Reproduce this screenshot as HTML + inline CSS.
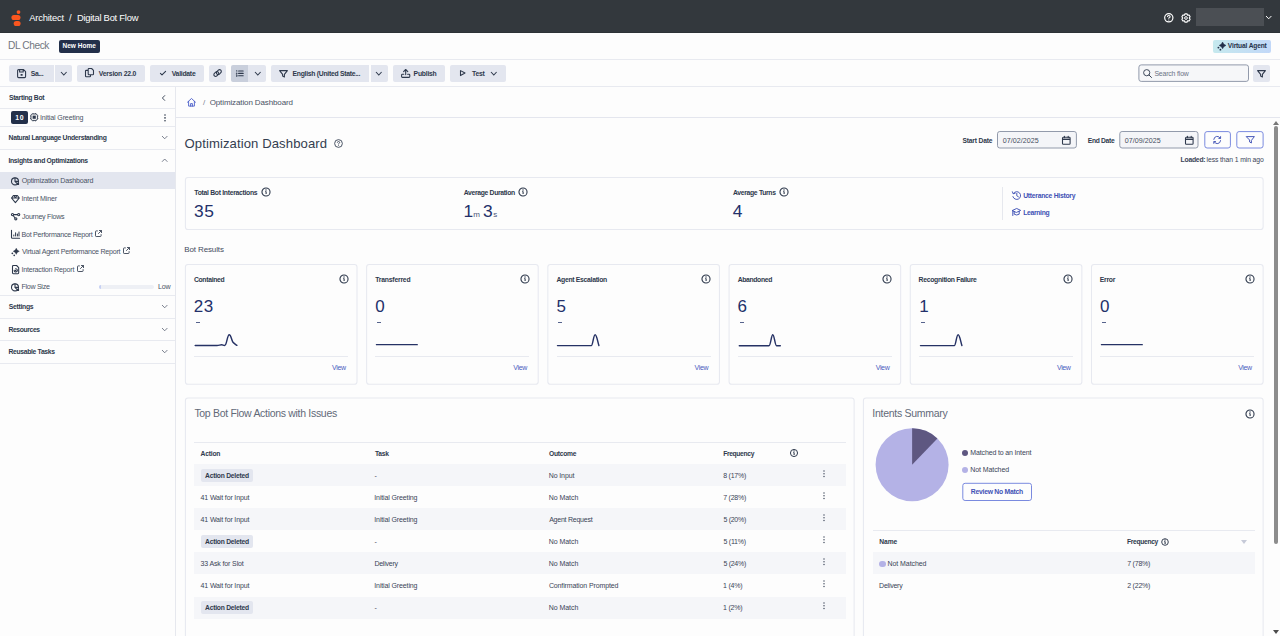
<!DOCTYPE html>
<html lang="en"><head><meta charset="utf-8"><title>Architect / Digital Bot Flow</title>
<style>
*{box-sizing:border-box;margin:0;padding:0}
html,body{width:1280px;height:636px;overflow:hidden;background:#fdfdfd;font-family:"Liberation Sans",sans-serif;color:#2e394c}
.a,.t{position:absolute;white-space:nowrap}
.t{line-height:1;color:#2e394c}
svg{position:absolute;overflow:visible}
.hl{height:1px;background:#e8eaf0}
.btn{background:#e3e6ef;border-radius:2px;height:17.4px;top:64.6px}
.card{background:#fdfdfd;border:1px solid #e4e6ec;border-radius:2.5px}
.row{left:194px;width:652px;height:22px;background:#f5f6f9}
</style></head><body>
<div class="a" style="left:0;top:0;width:1280px;height:33px;background:#33383d;border-bottom:1px solid #2d3236"></div>
<svg style="left:11.2px;top:9.7px" width="10" height="16.4" viewBox="0 0 10 16.4"><circle cx="7.5" cy="2.1" r="1.9" fill="#fb561f"/><rect x=".4" y="4.9" width="9.1" height="5.1" rx="2.55" fill="#fb561f"/><rect x="2.7" y="11" width="6.9" height="5.1" rx="2.55" fill="#fb561f"/></svg>
<svg style="left:1163.6px;top:12.9px" width="9.6" height="9.6" viewBox="0 0 10 10"><circle cx="5" cy="5" r="4.3" fill="none" stroke="#fff" stroke-width="1.25"/><path d="M3.6 4.1Q3.6 2.7 5 2.7 6.4 2.7 6.4 3.9 6.4 4.7 5 5.3V6" fill="none" stroke="#fff" stroke-width="1.1"/><circle cx="5" cy="7.3" r=".6" fill="#fff"/></svg>
<svg style="left:1180.7px;top:12.5px" width="10" height="10" viewBox="0 0 10 10"><path d="M4.03 0.81L5.97 0.81L6.65 2.14L8.14 2.07L9.11 3.74L8.30 5.00L9.11 6.26L8.14 7.93L6.65 7.86L5.97 9.19L4.03 9.19L3.35 7.86L1.86 7.93L0.89 6.26L1.70 5.00L0.89 3.74L1.86 2.07L3.35 2.14Z" fill="none" stroke="#fff" stroke-width="1.15" stroke-linejoin="round"/><circle cx="5" cy="5" r="1.35" fill="none" stroke="#fff" stroke-width="1"/></svg>
<div class="a" style="left:1196px;top:8px;width:68px;height:18px;background:#4b4f54"></div>
<svg style="left:1266.2px;top:16.2px" width="5.4" height="2.8" viewBox="0 0 5.4 2.8"><path d="M0 0L2.7 2.8L5.4 0" fill="none" stroke="#fff" stroke-width="1"/></svg>
<div class="a" style="left:58.7px;top:39.6px;width:41.5px;height:13.4px;border-radius:2px;background:#23304a"></div>
<div class="a" style="left:1212.6px;top:39.7px;width:58.7px;height:13.3px;border-radius:2px;background:linear-gradient(90deg,#c6e9ee,#c2d8f8)"></div>
<svg style="left:1217px;top:42.2px" width="8.5" height="8.5" viewBox="0 0 9 9"><path d="M5.9 0Q6.7 2.8 9.5 3.6 6.7 4.4 5.9 7.2 5.1 4.4 2.3 3.6 5.1 2.8 5.9 0Z" fill="#23304a" stroke="#23304a" stroke-width=".5" stroke-linejoin="round"/><circle cx="1.5" cy="5.9" r="1" fill="#23304a"/><circle cx="3.6" cy="8.1" r=".95" fill="#23304a"/></svg>
<div class="a hl" style="left:0;top:59.4px;width:1280px"></div>
<div class="a btn" style="left:9.1px;width:45px;border-radius:2px 0 0 2px"></div>
<div class="a btn" style="left:54.6px;width:17.4px;border-radius:0 2px 2px 0"></div>
<div class="a btn" style="left:76.8px;width:67.9px"></div>
<div class="a btn" style="left:149.8px;width:54.5px"></div>
<div class="a btn" style="left:209.1px;width:17.3px"></div>
<div class="a btn" style="left:231.1px;width:17px;background:#c9cfdc;border-radius:2px 0 0 2px"></div>
<div class="a btn" style="left:248.1px;width:18.3px;border-radius:0 2px 2px 0"></div>
<div class="a btn" style="left:271px;width:97.9px;border-radius:2px 0 0 2px"></div>
<div class="a btn" style="left:370.6px;width:17.5px;border-radius:0 2px 2px 0"></div>
<div class="a btn" style="left:392.7px;width:52.6px"></div>
<div class="a btn" style="left:449.8px;width:56.7px"></div>
<div class="a btn" style="left:1253px;width:17.3px"></div>
<svg style="left:17.2px;top:69px" width="9.2" height="9.2" viewBox="0 0 9.2 9.2"><path d="M1.6.6H6.6L8.6 2.6V7.6Q8.6 8.6 7.6 8.6H1.6Q.6 8.6 .6 7.6V1.6Q.6.6 1.6.6ZM2.6.8V3H6.2V.8" fill="none" stroke="#2e394c" stroke-width="1.08" stroke-linejoin="round" stroke-linecap="round"/><rect x="3.6" y="5" width="2" height="1.8" rx=".4" fill="#2e394c"/></svg>
<svg style="left:60.6px;top:71.6px" width="5.6" height="3" viewBox="0 0 5.6 3"><path d="M0 0L2.8 3L5.6 0" fill="none" stroke="#2e394c" stroke-width="1.05"/></svg>
<svg style="left:85.3px;top:68.4px" width="9" height="9.2" viewBox="0 0 9 9.2"><path d="M3.2 1.2Q3.2.5 3.9.5H6.6L8.5 2.4V6Q8.5 6.7 7.8 6.7H3.9Q3.2 6.7 3.2 6ZM3.2 2.4H1.2Q.5 2.4.5 3.1V8Q.5 8.7 1.2 8.7H4.8Q5.5 8.7 5.5 8V6.8" fill="none" stroke="#2e394c" stroke-width="1.08" stroke-linejoin="round" stroke-linecap="round"/></svg>
<svg style="left:159.6px;top:71px" width="6" height="4.4" viewBox="0 0 6 4.4"><path d="M.4 2.4 2 4 5.6.4" fill="none" stroke="#2e394c" stroke-width="1.08" stroke-linejoin="round" stroke-linecap="round"/></svg>
<svg style="left:213px;top:69px" width="9.2" height="8.2" viewBox="0 0 9.2 8.2"><rect x=".6" y="3.3" width="5.4" height="3.5" rx="1.75" transform="rotate(-45 3.3 5.05)" fill="none" stroke="#2e394c" stroke-width="1.08" stroke-linejoin="round" stroke-linecap="round"/><rect x="3.2" y="1.4" width="5.4" height="3.5" rx="1.75" transform="rotate(-45 5.9 3.15)" fill="none" stroke="#2e394c" stroke-width="1.08" stroke-linejoin="round" stroke-linecap="round"/></svg>
<svg style="left:235.8px;top:70px" width="7.4" height="6.8" viewBox="0 0 7.4 6.8"><path d="M2.6 1H7.2M2.6 3.4H7.2M2.6 5.8H7.2" fill="none" stroke="#2e394c" stroke-width="1.08" stroke-linejoin="round" stroke-linecap="round"/><path d="M.3.6.8.3V1.8M.2 3H1.1V3.6H.3V4.2H1.1M.2 5.2H1.1V6.4H.2M.4 5.8H1.1" fill="none" stroke="#2e394c" stroke-width=".75"/></svg>
<svg style="left:255.1px;top:71.6px" width="5.6" height="3" viewBox="0 0 5.6 3"><path d="M0 0L2.8 3L5.6 0" fill="none" stroke="#2e394c" stroke-width="1.05"/></svg>
<svg style="left:279.2px;top:69.7px" width="9" height="7.6" viewBox="0 0 9 7.6"><path d="M.6.6H8.4L5.4 4.4V7L3.6 6V4.4Z" fill="none" stroke="#2e394c" stroke-width="1.08" stroke-linejoin="round" stroke-linecap="round"/></svg>
<svg style="left:376.1px;top:71.6px" width="5.6" height="3" viewBox="0 0 5.6 3"><path d="M0 0L2.8 3L5.6 0" fill="none" stroke="#2e394c" stroke-width="1.05"/></svg>
<svg style="left:400.9px;top:68.5px" width="9.4" height="9" viewBox="0 0 9.4 9"><path d="M4.7 5.6V.6M2.6 2.6 4.7.5 6.8 2.6M2.8 5.2H1.4Q.6 5.2.6 6V7.6Q.6 8.4 1.4 8.4H8Q8.8 8.4 8.8 7.6V6Q8.8 5.2 8 5.2H6.6" fill="none" stroke="#2e394c" stroke-width="1.08" stroke-linejoin="round" stroke-linecap="round"/></svg>
<svg style="left:460.2px;top:70px" width="5.6" height="6.2" viewBox="0 0 5.6 6.2"><path d="M.5.6 5 3.1.5 5.6Z" fill="none" stroke="#2e394c" stroke-width="1.08" stroke-linejoin="round" stroke-linecap="round"/></svg>
<svg style="left:490.7px;top:71.6px" width="5.6" height="3" viewBox="0 0 5.6 3"><path d="M0 0L2.8 3L5.6 0" fill="none" stroke="#2e394c" stroke-width="1.05"/></svg>
<svg style="left:0;top:0" width="1280" height="636"><rect x="1138.90" y="64.90" width="109.60" height="16.50" rx="2.3" fill="#f6f7f9" stroke="#929aab" stroke-width="1"/></svg>
<svg style="left:1143.4px;top:68.6px" width="9" height="9" viewBox="0 0 9 9"><circle cx="3.7" cy="3.7" r="3.1" fill="none" stroke="#2e394c" stroke-width=".9"/><path d="M6 6 8.5 8.5" fill="none" stroke="#2e394c" stroke-width=".95" stroke-linecap="round"/></svg>
<svg style="left:1257.4px;top:69.6px" width="9" height="7.6" viewBox="0 0 9 7.6"><path d="M.6.6H8.4L5.4 4.4V7L3.6 6V4.4Z" fill="none" stroke="#2e394c" stroke-width="1.08" stroke-linejoin="round" stroke-linecap="round"/></svg>
<div class="a hl" style="left:0;top:86.4px;width:1280px"></div>
<div class="a" style="left:175.2px;top:87px;width:1px;height:549px;background:#e6e8ee"></div>
<div class="a hl" style="left:0;top:108.4px;width:175px"></div>
<div class="a hl" style="left:0;top:126.3px;width:175px"></div>
<div class="a hl" style="left:0;top:148.9px;width:175px"></div>
<div class="a hl" style="left:0;top:295.4px;width:175px"></div>
<div class="a hl" style="left:0;top:317.8px;width:175px"></div>
<div class="a hl" style="left:0;top:340.2px;width:175px"></div>
<div class="a hl" style="left:0;top:362.7px;width:175px"></div>
<svg style="left:161.6px;top:94.5px" width="3.4" height="6" viewBox="0 0 3.4 6"><path d="M3 .3.4 3 3 5.7" fill="none" stroke="#2e394c" stroke-width=".9"/></svg>
<div class="a" style="left:11px;top:111px;width:16.5px;height:13px;border-radius:2px;background:#23304a"></div>
<svg style="left:29.6px;top:113.4px" width="8.4" height="8.4" viewBox="0 0 8.4 8.4"><rect x="1" y="1" width="6.4" height="6.4" rx="1.6" fill="none" stroke="#2e394c" stroke-width=".9"/><rect x="2.6" y="2.6" width="3.2" height="3.2" fill="#2e394c"/><path d="M3 0V1M5.4 0V1M3 7.4V8.4M5.4 7.4V8.4M0 3H1M0 5.4H1M7.4 3H8.4M7.4 5.4H8.4" stroke="#2e394c" stroke-width=".8"/></svg>
<svg style="left:163.6px;top:114px" width="2" height="8" viewBox="0 0 2 8"><circle cx="1" cy="1" r=".8" fill="#2e394c"/><circle cx="1" cy="3.9" r=".8" fill="#2e394c"/><circle cx="1" cy="6.8" r=".8" fill="#2e394c"/></svg>
<svg style="left:161.5px;top:136.4px" width="5.4" height="2.8" viewBox="0 0 5.4 2.8"><path d="M0 0L2.7 2.8L5.4 0" fill="none" stroke="#5a6274" stroke-width="0.8"/></svg>
<svg style="left:161.5px;top:158.6px" width="5.4" height="2.8" viewBox="0 0 5.4 2.8"><path d="M0 2.8 2.7 0 5.4 2.8" fill="none" stroke="#5a6274" stroke-width=".8"/></svg>
<svg style="left:161.5px;top:305.3px" width="5.4" height="2.8" viewBox="0 0 5.4 2.8"><path d="M0 0L2.7 2.8L5.4 0" fill="none" stroke="#5a6274" stroke-width="0.8"/></svg>
<svg style="left:161.5px;top:327.7px" width="5.4" height="2.8" viewBox="0 0 5.4 2.8"><path d="M0 0L2.7 2.8L5.4 0" fill="none" stroke="#5a6274" stroke-width="0.8"/></svg>
<svg style="left:161.5px;top:350.1px" width="5.4" height="2.8" viewBox="0 0 5.4 2.8"><path d="M0 0L2.7 2.8L5.4 0" fill="none" stroke="#5a6274" stroke-width="0.8"/></svg>
<div class="a" style="left:0;top:172px;width:175.2px;height:17.2px;background:#e3e6ef"></div>
<svg style="left:10.9px;top:176.6px" width="8.6" height="8.8" viewBox="0 0 8.6 8.8"><circle cx="4" cy="4.4" r="3.5" fill="none" stroke="#2e394c" stroke-width="1.08" stroke-linejoin="round" stroke-linecap="round"/><path d="M4 .9V4.4L6.4 6.9M4 4.4H7.4" fill="none" stroke="#2e394c" stroke-width="1.08" stroke-linejoin="round" stroke-linecap="round"/><circle cx="7" cy="6.9" r="1.2" fill="#2e394c"/></svg>
<svg style="left:11px;top:194.8px" width="8.8" height="8.2" viewBox="0 0 8.8 8.2"><path d="M2.4.5H6.4L8.3 3 4.4 7.7.5 3ZM.5 3H8.3M3 .7 4.4 2.7 5.8.7" fill="none" stroke="#2e394c" stroke-width="1.08" stroke-linejoin="round" stroke-linecap="round"/></svg>
<svg style="left:10.8px;top:212.8px" width="9.2" height="7.4" viewBox="0 0 9.2 7.4"><circle cx="1.5" cy="1.6" r="1.1" fill="none" stroke="#2e394c" stroke-width="1.08" stroke-linejoin="round" stroke-linecap="round"/><circle cx="7.7" cy="1.6" r="1.1" fill="none" stroke="#2e394c" stroke-width="1.08" stroke-linejoin="round" stroke-linecap="round"/><circle cx="4.8" cy="5.8" r="1.1" fill="none" stroke="#2e394c" stroke-width="1.08" stroke-linejoin="round" stroke-linecap="round"/><path d="M2.6 1.6H6.6M2.2 2.5 4 5" fill="none" stroke="#2e394c" stroke-width="1.08" stroke-linejoin="round" stroke-linecap="round"/></svg>
<svg style="left:11px;top:229.8px" width="8.8" height="8.8" viewBox="0 0 8.8 8.8"><path d="M.5.3V7.4Q.5 8.3 1.4 8.3H8.6" fill="none" stroke="#2e394c" stroke-width="1.08" stroke-linejoin="round" stroke-linecap="round"/><path d="M2.8 6.4V4.6M4.6 6.4V2.4M6.4 6.4V3.6M8 6.4V1.6" fill="none" stroke="#2e394c" stroke-width="1"/></svg>
<svg style="left:11.2px;top:247.6px" width="8" height="8.2" viewBox="0 0 9 9"><path d="M5.9 0Q6.7 2.8 9.5 3.6 6.7 4.4 5.9 7.2 5.1 4.4 2.3 3.6 5.1 2.8 5.9 0Z" fill="#2e394c" stroke="#2e394c" stroke-width=".25" stroke-linejoin="round"/><circle cx="1.5" cy="5.9" r="1" fill="#2e394c"/><circle cx="3.6" cy="8.1" r=".95" fill="#2e394c"/></svg>
<svg style="left:11.6px;top:264.6px" width="7.2" height="9.2" viewBox="0 0 7.2 9.2"><path d="M1.4.5H4.6L6.7 2.6V7.8Q6.7 8.7 5.8 8.7H1.4Q.5 8.7.5 7.8V1.4Q.5.5 1.4.5Z" fill="none" stroke="#2e394c" stroke-width="1.08" stroke-linejoin="round" stroke-linecap="round"/><path d="M2.2 5.4A1.6 1.6 0 1 0 3.6 3.8" fill="none" stroke="#2e394c" stroke-width="1.08" stroke-linejoin="round" stroke-linecap="round"/><rect x="2.8" y="4.8" width="1.6" height="1.6" fill="#2e394c"/></svg>
<svg style="left:11.2px;top:283.2px" width="8.6" height="8.8" viewBox="0 0 8.6 8.8"><circle cx="4" cy="4.4" r="3.5" fill="none" stroke="#2e394c" stroke-width="1.08" stroke-linejoin="round" stroke-linecap="round"/><path d="M4 .9V4.4L6.4 6.9M4 4.4H7.4" fill="none" stroke="#2e394c" stroke-width="1.08" stroke-linejoin="round" stroke-linecap="round"/><circle cx="7" cy="6.9" r="1.2" fill="#2e394c"/></svg>
<svg style="left:95.0px;top:229.6px" width="7" height="7" viewBox="0 0 7 7"><path d="M2.8.9H1.2Q.5.9.5 1.6V5.8Q.5 6.5 1.2 6.5H5.4Q6.1 6.5 6.1 5.8V4.2M4 .5H6.5V3M6.5.5 3.2 3.8" fill="none" stroke="#2e394c" stroke-width=".85"/></svg>
<svg style="left:123.4px;top:247.1px" width="7" height="7" viewBox="0 0 7 7"><path d="M2.8.9H1.2Q.5.9.5 1.6V5.8Q.5 6.5 1.2 6.5H5.4Q6.1 6.5 6.1 5.8V4.2M4 .5H6.5V3M6.5.5 3.2 3.8" fill="none" stroke="#2e394c" stroke-width=".85"/></svg>
<svg style="left:77.0px;top:264.7px" width="7" height="7" viewBox="0 0 7 7"><path d="M2.8.9H1.2Q.5.9.5 1.6V5.8Q.5 6.5 1.2 6.5H5.4Q6.1 6.5 6.1 5.8V4.2M4 .5H6.5V3M6.5.5 3.2 3.8" fill="none" stroke="#2e394c" stroke-width=".85"/></svg>
<div class="a" style="left:98.5px;top:284.7px;width:55.5px;height:4px;border-radius:2px;background:#eef0f5"></div>
<div class="a" style="left:98.5px;top:284.7px;width:2px;height:4px;border-radius:2px 0 0 2px;background:#c6d0f4"></div>
<svg style="left:186.9px;top:98.2px" width="9" height="8.6" viewBox="0 0 9 8.6"><path d="M.5 4.2 4.5.5 8.5 4.2M1.6 3.4V8.1H7.4V3.4M3.6 8.1V5.6H5.4V8.1" fill="none" stroke="#4a5cc8" stroke-width=".9" stroke-linejoin="round" stroke-linecap="round"/></svg>
<div class="a" style="left:176px;top:116.6px;width:1104px;height:1.4px;background:#e4e6ee"></div>
<svg style="left:334px;top:138.5px" width="9" height="9" viewBox="0 0 10 10"><circle cx="5" cy="5" r="4.3" fill="none" stroke="#2e394c" stroke-width=".95"/><path d="M3.7 4.1Q3.7 2.8 5 2.8 6.3 2.8 6.3 3.9 6.3 4.7 5 5.3V6" fill="none" stroke="#2e394c" stroke-width=".9"/><circle cx="5" cy="7.3" r=".55" fill="#2e394c"/></svg>
<svg style="left:0;top:0" width="1280" height="636"><rect x="997.50" y="131.50" width="78.90" height="16.50" rx="2.3" fill="#f4f5f8" stroke="#929aab" stroke-width="1"/></svg>
<svg style="left:1062.4px;top:136.1px" width="8.6" height="8.8" viewBox="0 0 8.6 8.8"><rect x=".5" y="1.3" width="7.6" height="7" rx=".8" fill="none" stroke="#2e394c" stroke-width="1.08" stroke-linejoin="round" stroke-linecap="round"/><path d="M.5 3.3H8.1" stroke="#2e394c" stroke-width="1.4"/><path d="M2.4.3V1.6M6.2.3V1.6" fill="none" stroke="#2e394c" stroke-width="1.08" stroke-linejoin="round" stroke-linecap="round"/></svg>
<svg style="left:0;top:0" width="1280" height="636"><rect x="1119.80" y="131.50" width="78.20" height="16.50" rx="2.3" fill="#f4f5f8" stroke="#929aab" stroke-width="1"/></svg>
<svg style="left:1184.7px;top:136.1px" width="8.6" height="8.8" viewBox="0 0 8.6 8.8"><rect x=".5" y="1.3" width="7.6" height="7" rx=".8" fill="none" stroke="#2e394c" stroke-width="1.08" stroke-linejoin="round" stroke-linecap="round"/><path d="M.5 3.3H8.1" stroke="#2e394c" stroke-width="1.4"/><path d="M2.4.3V1.6M6.2.3V1.6" fill="none" stroke="#2e394c" stroke-width="1.08" stroke-linejoin="round" stroke-linecap="round"/></svg>
<svg style="left:0;top:0" width="1280" height="636"><rect x="1204.80" y="131.60" width="25.60" height="16.40" rx="2.3" fill="#fdfdfd" stroke="#7a8adf" stroke-width="1"/></svg>
<svg style="left:0;top:0" width="1280" height="636"><rect x="1236.80" y="131.60" width="26.30" height="16.40" rx="2.3" fill="#fdfdfd" stroke="#7a8adf" stroke-width="1"/></svg>
<svg style="left:1213.4px;top:135.8px" width="8.4" height="8" viewBox="0 0 8.4 8"><path d="M.8 3.4A3.4 3.4 0 0 1 7.2 2.2M7.6.6V2.4H5.8M7.6 4.6A3.4 3.4 0 0 1 1.2 5.8M.8 7.4V5.6H2.6" fill="none" stroke="#3f51b5" stroke-width=".95" stroke-linejoin="round" stroke-linecap="round"/></svg>
<svg style="left:1245.6px;top:136.4px" width="9" height="7.6" viewBox="0 0 9 7.6"><path d="M.6.6H8.4L5.4 4.4V7L3.6 6V4.4Z" fill="none" stroke="#3f51b5" stroke-width=".95" stroke-linejoin="round" stroke-linecap="round"/></svg>
<svg style="left:0;top:0" width="1280" height="636"><rect x="185.40" y="177.50" width="1077.70" height="52.00" rx="2.6" fill="#fdfdfd" stroke="#e7e9f0" stroke-width="1.05"/></svg>
<svg style="left:260.5px;top:187.0px" width="10" height="10" viewBox="0 0 10 10"><circle cx="5" cy="5" r="4.05" fill="none" stroke="#2e394c" stroke-width="1.1"/><path d="M5.1 4.4V7.1M4.3 4.5H5.1" fill="none" stroke="#2e394c" stroke-width="1.1"/><circle cx="5" cy="3" r=".7" fill="#2e394c"/></svg>
<svg style="left:517.6px;top:187.0px" width="10" height="10" viewBox="0 0 10 10"><circle cx="5" cy="5" r="4.05" fill="none" stroke="#2e394c" stroke-width="1.1"/><path d="M5.1 4.4V7.1M4.3 4.5H5.1" fill="none" stroke="#2e394c" stroke-width="1.1"/><circle cx="5" cy="3" r=".7" fill="#2e394c"/></svg>
<svg style="left:778.5px;top:187.0px" width="10" height="10" viewBox="0 0 10 10"><circle cx="5" cy="5" r="4.05" fill="none" stroke="#2e394c" stroke-width="1.1"/><path d="M5.1 4.4V7.1M4.3 4.5H5.1" fill="none" stroke="#2e394c" stroke-width="1.1"/><circle cx="5" cy="3" r=".7" fill="#2e394c"/></svg>
<div class="a" style="left:1002.2px;top:187px;width:1px;height:33.2px;background:#e6e8ee"></div>
<svg style="left:1011.8px;top:190.8px" width="9" height="9" viewBox="0 0 9 9"><path d="M1.4 2.4A3.9 3.9 0 1 1 .9 5.6M.4.8 1.2 2.8 3.2 2.2M4.8 2.4V4.8L6.4 5.8" fill="none" stroke="#3f51b5" stroke-width=".95" stroke-linejoin="round" stroke-linecap="round"/></svg>
<svg style="left:1011.8px;top:208px" width="9" height="8.4" viewBox="0 0 9 8.4"><path d="M.5 2.4 4.7.5 8.7 2.4 4.7 4.3ZM2.2 3.4V6.2Q4.7 7.8 7.2 6.2V3.4M.8 2.8V7.6" fill="none" stroke="#3f51b5" stroke-width=".95" stroke-linejoin="round" stroke-linecap="round"/></svg>
<svg style="left:0;top:0" width="1280" height="636"><rect x="185.40" y="264.50" width="171.60" height="119.80" rx="2.6" fill="#fdfdfd" stroke="#e7e9f0" stroke-width="1.05"/></svg>
<svg style="left:338.5px;top:274.1px" width="10" height="10" viewBox="0 0 10 10"><circle cx="5" cy="5" r="4.05" fill="none" stroke="#2e394c" stroke-width="1.1"/><path d="M5.1 4.4V7.1M4.3 4.5H5.1" fill="none" stroke="#2e394c" stroke-width="1.1"/><circle cx="5" cy="3" r=".7" fill="#2e394c"/></svg>
<div class="a" style="left:195.9px;top:322px;width:4.1px;height:.85px;background:#56638c"></div>
<svg style="left:195.0px;top:333.7px" width="42" height="12" viewBox="0 0 42 12"><path d="M0.2 11.5H22C24 11.5 25 10.8 26.7 10.8 28 10.8 28.5 11.6 29.8 11.4 31.8 11 32.3 0.7 34.2 0.7 36 0.7 36.5 6 38 8.3 39.5 10 40.5 10.3 41.9 11.3" fill="none" stroke="#263265" stroke-width="1.45" stroke-linecap="round" stroke-linejoin="round"/></svg>
<div class="a hl" style="left:194.1px;top:355.9px;width:154.0px"></div>
<svg style="left:0;top:0" width="1280" height="636"><rect x="366.62" y="264.50" width="171.60" height="119.80" rx="2.6" fill="#fdfdfd" stroke="#e7e9f0" stroke-width="1.05"/></svg>
<svg style="left:519.7px;top:274.1px" width="10" height="10" viewBox="0 0 10 10"><circle cx="5" cy="5" r="4.05" fill="none" stroke="#2e394c" stroke-width="1.1"/><path d="M5.1 4.4V7.1M4.3 4.5H5.1" fill="none" stroke="#2e394c" stroke-width="1.1"/><circle cx="5" cy="3" r=".7" fill="#2e394c"/></svg>
<div class="a" style="left:377.1px;top:322px;width:4.1px;height:.85px;background:#56638c"></div>
<svg style="left:376.2px;top:333.7px" width="42" height="12" viewBox="0 0 42 12"><path d="M0.4 10.7H41.3" fill="none" stroke="#263265" stroke-width="1.25" stroke-linecap="round" stroke-linejoin="round"/></svg>
<div class="a hl" style="left:375.3px;top:355.9px;width:154.0px"></div>
<svg style="left:0;top:0" width="1280" height="636"><rect x="547.84" y="264.50" width="171.60" height="119.80" rx="2.6" fill="#fdfdfd" stroke="#e7e9f0" stroke-width="1.05"/></svg>
<svg style="left:700.9px;top:274.1px" width="10" height="10" viewBox="0 0 10 10"><circle cx="5" cy="5" r="4.05" fill="none" stroke="#2e394c" stroke-width="1.1"/><path d="M5.1 4.4V7.1M4.3 4.5H5.1" fill="none" stroke="#2e394c" stroke-width="1.1"/><circle cx="5" cy="3" r=".7" fill="#2e394c"/></svg>
<div class="a" style="left:558.3px;top:322px;width:4.1px;height:.85px;background:#56638c"></div>
<svg style="left:557.4px;top:333.7px" width="42" height="12" viewBox="0 0 42 12"><path d="M0.5 11.6H34.3C35.8 11.6 36.5 0.7 38.1 0.7 39.7 0.7 40.5 7 41.9 11.5" fill="none" stroke="#263265" stroke-width="1.45" stroke-linecap="round" stroke-linejoin="round"/></svg>
<div class="a hl" style="left:556.5px;top:355.9px;width:154.0px"></div>
<svg style="left:0;top:0" width="1280" height="636"><rect x="729.06" y="264.50" width="171.60" height="119.80" rx="2.6" fill="#fdfdfd" stroke="#e7e9f0" stroke-width="1.05"/></svg>
<svg style="left:882.2px;top:274.1px" width="10" height="10" viewBox="0 0 10 10"><circle cx="5" cy="5" r="4.05" fill="none" stroke="#2e394c" stroke-width="1.1"/><path d="M5.1 4.4V7.1M4.3 4.5H5.1" fill="none" stroke="#2e394c" stroke-width="1.1"/><circle cx="5" cy="3" r=".7" fill="#2e394c"/></svg>
<div class="a" style="left:739.6px;top:322px;width:4.1px;height:.85px;background:#56638c"></div>
<svg style="left:738.7px;top:333.7px" width="42" height="12" viewBox="0 0 42 12"><path d="M0.3 11.7H30C31.6 11.7 32.3 0.7 33.8 0.7 35.3 0.7 36 11.7 37.5 11.7H41.3" fill="none" stroke="#263265" stroke-width="1.45" stroke-linecap="round" stroke-linejoin="round"/></svg>
<div class="a hl" style="left:737.8px;top:355.9px;width:154.0px"></div>
<svg style="left:0;top:0" width="1280" height="636"><rect x="910.28" y="264.50" width="171.60" height="119.80" rx="2.6" fill="#fdfdfd" stroke="#e7e9f0" stroke-width="1.05"/></svg>
<svg style="left:1063.4px;top:274.1px" width="10" height="10" viewBox="0 0 10 10"><circle cx="5" cy="5" r="4.05" fill="none" stroke="#2e394c" stroke-width="1.1"/><path d="M5.1 4.4V7.1M4.3 4.5H5.1" fill="none" stroke="#2e394c" stroke-width="1.1"/><circle cx="5" cy="3" r=".7" fill="#2e394c"/></svg>
<div class="a" style="left:920.8px;top:322px;width:4.1px;height:.85px;background:#56638c"></div>
<svg style="left:919.9px;top:333.7px" width="42" height="12" viewBox="0 0 42 12"><path d="M0.5 11.6H34.3C35.8 11.6 36.5 0.7 38.1 0.7 39.7 0.7 40.5 7 41.9 11.5" fill="none" stroke="#263265" stroke-width="1.45" stroke-linecap="round" stroke-linejoin="round"/></svg>
<div class="a hl" style="left:919.0px;top:355.9px;width:154.0px"></div>
<svg style="left:0;top:0" width="1280" height="636"><rect x="1091.50" y="264.50" width="171.60" height="119.80" rx="2.6" fill="#fdfdfd" stroke="#e7e9f0" stroke-width="1.05"/></svg>
<svg style="left:1244.6px;top:274.1px" width="10" height="10" viewBox="0 0 10 10"><circle cx="5" cy="5" r="4.05" fill="none" stroke="#2e394c" stroke-width="1.1"/><path d="M5.1 4.4V7.1M4.3 4.5H5.1" fill="none" stroke="#2e394c" stroke-width="1.1"/><circle cx="5" cy="3" r=".7" fill="#2e394c"/></svg>
<div class="a" style="left:1102.0px;top:322px;width:4.1px;height:.85px;background:#56638c"></div>
<svg style="left:1101.1px;top:333.7px" width="42" height="12" viewBox="0 0 42 12"><path d="M0.4 10.7H41.3" fill="none" stroke="#263265" stroke-width="1.25" stroke-linecap="round" stroke-linejoin="round"/></svg>
<div class="a hl" style="left:1100.2px;top:355.9px;width:154.0px"></div>
<svg style="left:0;top:0" width="1280" height="636"><rect x="185.40" y="398.00" width="668.70" height="262.00" rx="2.6" fill="#fdfdfd" stroke="#e7e9f0" stroke-width="1.05"/></svg>
<div class="a hl" style="left:194px;top:442px;width:652px"></div>
<svg style="left:788.7px;top:448.3px" width="10" height="10" viewBox="0 0 10 10"><circle cx="5" cy="5" r="3.55" fill="none" stroke="#2e394c" stroke-width="1"/><path d="M5.1 4.4V7.1M4.3 4.5H5.1" fill="none" stroke="#2e394c" stroke-width="1.1"/><circle cx="5" cy="3" r=".7" fill="#2e394c"/></svg>
<div class="a row" style="top:464.3px"></div>
<div class="a" style="left:200.7px;top:469.1px;width:52.4px;height:12.6px;border-radius:2px;background:#e3e6ef"></div>
<svg style="left:822.8px;top:470.1px" width="2" height="8" viewBox="0 0 2 8"><circle cx="1" cy="1" r=".75" fill="#4a5365"/><circle cx="1" cy="3.8" r=".75" fill="#4a5365"/><circle cx="1" cy="6.6" r=".75" fill="#4a5365"/></svg>
<svg style="left:822.8px;top:492.1px" width="2" height="8" viewBox="0 0 2 8"><circle cx="1" cy="1" r=".75" fill="#4a5365"/><circle cx="1" cy="3.8" r=".75" fill="#4a5365"/><circle cx="1" cy="6.6" r=".75" fill="#4a5365"/></svg>
<div class="a row" style="top:508.4px"></div>
<svg style="left:822.8px;top:514.2px" width="2" height="8" viewBox="0 0 2 8"><circle cx="1" cy="1" r=".75" fill="#4a5365"/><circle cx="1" cy="3.8" r=".75" fill="#4a5365"/><circle cx="1" cy="6.6" r=".75" fill="#4a5365"/></svg>
<div class="a" style="left:200.7px;top:535.2px;width:52.4px;height:12.6px;border-radius:2px;background:#e3e6ef"></div>
<svg style="left:822.8px;top:536.2px" width="2" height="8" viewBox="0 0 2 8"><circle cx="1" cy="1" r=".75" fill="#4a5365"/><circle cx="1" cy="3.8" r=".75" fill="#4a5365"/><circle cx="1" cy="6.6" r=".75" fill="#4a5365"/></svg>
<div class="a row" style="top:552.4px"></div>
<svg style="left:822.8px;top:558.2px" width="2" height="8" viewBox="0 0 2 8"><circle cx="1" cy="1" r=".75" fill="#4a5365"/><circle cx="1" cy="3.8" r=".75" fill="#4a5365"/><circle cx="1" cy="6.6" r=".75" fill="#4a5365"/></svg>
<svg style="left:822.8px;top:580.2px" width="2" height="8" viewBox="0 0 2 8"><circle cx="1" cy="1" r=".75" fill="#4a5365"/><circle cx="1" cy="3.8" r=".75" fill="#4a5365"/><circle cx="1" cy="6.6" r=".75" fill="#4a5365"/></svg>
<div class="a row" style="top:596.5px"></div>
<div class="a" style="left:200.7px;top:601.3px;width:52.4px;height:12.6px;border-radius:2px;background:#e3e6ef"></div>
<svg style="left:822.8px;top:602.3px" width="2" height="8" viewBox="0 0 2 8"><circle cx="1" cy="1" r=".75" fill="#4a5365"/><circle cx="1" cy="3.8" r=".75" fill="#4a5365"/><circle cx="1" cy="6.6" r=".75" fill="#4a5365"/></svg>
<svg style="left:0;top:0" width="1280" height="636"><rect x="863.40" y="398.00" width="399.70" height="262.00" rx="2.6" fill="#fdfdfd" stroke="#e7e9f0" stroke-width="1.05"/></svg>
<svg style="left:1244.6px;top:408.7px" width="10" height="10" viewBox="0 0 10 10"><circle cx="5" cy="5" r="4.05" fill="none" stroke="#2e394c" stroke-width="1.1"/><path d="M5.1 4.4V7.1M4.3 4.5H5.1" fill="none" stroke="#2e394c" stroke-width="1.1"/><circle cx="5" cy="3" r=".7" fill="#2e394c"/></svg>
<svg style="left:0;top:0" width="1280" height="636"><circle cx="912.1" cy="464.7" r="36.5" fill="#b4b2e6"/><path d="M912.1 464.7V428.2A36.5 36.5 0 0 1 937.41 438.40Z" fill="#5e5781"/></svg>
<div class="a" style="left:962px;top:449.7px;width:6.4px;height:6.4px;border-radius:50%;background:#5e5781"></div>
<div class="a" style="left:962px;top:466.5px;width:6.4px;height:6.4px;border-radius:50%;background:#b4b2e6"></div>
<svg style="left:0;top:0" width="1280" height="636"><rect x="962.80" y="483.30" width="68.70" height="17.20" rx="2.3" fill="#fdfdfd" stroke="#7a8adf" stroke-width="1"/></svg>
<div class="a hl" style="left:873px;top:530.3px;width:382px"></div>
<svg style="left:1160.0px;top:536.7px" width="10" height="10" viewBox="0 0 10 10"><circle cx="5" cy="5" r="3.3" fill="none" stroke="#2e394c" stroke-width="0.95"/><path d="M5.1 4.4V7.1M4.3 4.5H5.1" fill="none" stroke="#2e394c" stroke-width="1.1"/><circle cx="5" cy="3" r=".7" fill="#2e394c"/></svg>
<svg style="left:1241.4px;top:539.5px" width="6" height="4" viewBox="0 0 6 4"><path d="M0 0H6L3 4Z" fill="#c6cad8"/></svg>
<div class="a" style="left:873px;top:552.2px;width:382px;height:22.3px;background:#f5f6f9"></div>
<div class="a" style="left:879.4px;top:560.9px;width:6.2px;height:6.2px;border-radius:50%;background:#b4b2e6"></div>
<div class="t" style="left:29.20px;top:13px;font-size:9.4px;letter-spacing:-0.194px;color:#fff">Architect</div>
<div class="t" style="left:69.00px;top:13px;font-size:9.4px;color:#fff">/</div>
<div class="t" style="left:76.90px;top:13px;font-size:9.4px;letter-spacing:-0.241px;color:#fff">Digital Bot Flow</div>
<div class="t" style="left:8.00px;top:41px;font-size:10.2px;letter-spacing:-0.412px;color:#73777f">DL Check</div>
<div class="t" style="left:62.50px;top:43px;font-size:6.5px;letter-spacing:0.012px;font-weight:bold;color:#fff">New Home</div>
<div class="t" style="left:1227.80px;top:43px;font-size:6.6px;letter-spacing:-0.138px;font-weight:bold;color:#23304a">Virtual Agent</div>
<div class="t" style="left:1154.40px;top:71px;font-size:6.9px;letter-spacing:-0.157px;color:#6b7385">Search flow</div>
<div class="t" style="left:30.80px;top:71px;font-size:6.8px;letter-spacing:-0.299px;font-weight:bold">Sa...</div>
<div class="t" style="left:98.80px;top:71px;font-size:6.8px;letter-spacing:-0.192px;font-weight:bold">Version 22.0</div>
<div class="t" style="left:171.70px;top:71px;font-size:6.8px;letter-spacing:-0.246px;font-weight:bold">Validate</div>
<div class="t" style="left:292.50px;top:71px;font-size:6.8px;letter-spacing:-0.268px;font-weight:bold">English (United State...</div>
<div class="t" style="left:413.60px;top:71px;font-size:6.8px;letter-spacing:-0.234px;font-weight:bold">Publish</div>
<div class="t" style="left:472.00px;top:71px;font-size:6.8px;letter-spacing:-0.204px;font-weight:bold">Test</div>
<div class="t" style="left:8.90px;top:95px;font-size:6.8px;letter-spacing:-0.295px;font-weight:bold">Starting Bot</div>
<div class="t" style="left:15.30px;top:115px;font-size:6.9px;letter-spacing:0.563px;font-weight:bold;color:#fff">10</div>
<div class="t" style="left:40.00px;top:115px;font-size:7.1px;letter-spacing:-0.155px;color:#4a5365">Initial Greeting</div>
<div class="t" style="left:8.60px;top:135px;font-size:6.8px;letter-spacing:-0.312px;font-weight:bold">Natural Language Understanding</div>
<div class="t" style="left:8.40px;top:158px;font-size:6.8px;letter-spacing:-0.284px;font-weight:bold">Insights and Optimizations</div>
<div class="t" style="left:21.70px;top:178px;font-size:7.1px;letter-spacing:-0.210px;color:#4a5365">Optimization Dashboard</div>
<div class="t" style="left:21.40px;top:196px;font-size:7.1px;letter-spacing:-0.148px;color:#4a5365">Intent Miner</div>
<div class="t" style="left:21.90px;top:214px;font-size:7.1px;letter-spacing:-0.252px;color:#4a5365">Journey Flows</div>
<div class="t" style="left:21.50px;top:232px;font-size:7.1px;letter-spacing:-0.252px;color:#4a5365">Bot Performance Report</div>
<div class="t" style="left:22.00px;top:249px;font-size:7.1px;letter-spacing:-0.240px;color:#4a5365">Virtual Agent Performance Report</div>
<div class="t" style="left:21.40px;top:267px;font-size:7.1px;letter-spacing:-0.198px;color:#4a5365">Interaction Report</div>
<div class="t" style="left:21.50px;top:284px;font-size:7.1px;letter-spacing:-0.303px;color:#4a5365">Flow Size</div>
<div class="t" style="left:158.00px;top:284px;font-size:7.1px;letter-spacing:-0.249px;color:#4a5365">Low</div>
<div class="t" style="left:8.70px;top:304px;font-size:6.8px;letter-spacing:-0.278px;font-weight:bold">Settings</div>
<div class="t" style="left:8.40px;top:327px;font-size:6.8px;letter-spacing:-0.386px;font-weight:bold">Resources</div>
<div class="t" style="left:8.40px;top:349px;font-size:6.8px;letter-spacing:-0.325px;font-weight:bold">Reusable Tasks</div>
<div class="t" style="left:202.90px;top:99px;font-size:8px;color:#7a8192">/</div>
<div class="t" style="left:209.70px;top:99px;font-size:8px;letter-spacing:-0.118px;color:#4a5365">Optimization Dashboard</div>
<div class="t" style="left:184.50px;top:137px;font-size:13.1px;letter-spacing:0.098px;color:#343e50">Optimization Dashboard</div>
<div class="t" style="left:962.50px;top:138px;font-size:6.7px;letter-spacing:-0.180px;font-weight:bold">Start Date</div>
<div class="t" style="left:1002.80px;top:138px;font-size:7.1px;letter-spacing:0.046px;color:#464e60">07/02/2025</div>
<div class="t" style="left:1087.80px;top:138px;font-size:6.7px;letter-spacing:-0.302px;font-weight:bold">End Date</div>
<div class="t" style="left:1124.80px;top:138px;font-size:7.1px;letter-spacing:0.046px;color:#464e60">07/09/2025</div>
<div class="t" style="left:1180.60px;top:157px;font-size:6.8px;letter-spacing:-0.246px;font-weight:bold;color:#3a4457">Loaded:</div>
<div class="t" style="left:1206.60px;top:157px;font-size:6.8px;letter-spacing:-0.099px;color:#3a4457">less than 1 min ago</div>
<div class="t" style="left:194.30px;top:190px;font-size:6.8px;letter-spacing:-0.291px;font-weight:bold">Total Bot Interactions</div>
<div class="t" style="left:194.00px;top:203px;font-size:17.4px;letter-spacing:0.600px;color:#23306a">35</div>
<div class="t" style="left:463.80px;top:190px;font-size:6.8px;letter-spacing:-0.338px;font-weight:bold">Average Duration</div>
<div class="t" style="left:463.40px;top:203px;font-size:17.4px;color:#23306a">1</div>
<div class="t" style="left:473.30px;top:211px;font-size:8px;color:#4a5578">m</div>
<div class="t" style="left:483.00px;top:203px;font-size:17.4px;color:#23306a">3</div>
<div class="t" style="left:493.20px;top:211px;font-size:8px;color:#4a5578">s</div>
<div class="t" style="left:733.00px;top:190px;font-size:6.8px;letter-spacing:-0.323px;font-weight:bold">Average Turns</div>
<div class="t" style="left:732.70px;top:203px;font-size:17.4px;color:#23306a">4</div>
<div class="t" style="left:1023.20px;top:193px;font-size:6.8px;letter-spacing:-0.275px;font-weight:bold;color:#3f51b5">Utterance History</div>
<div class="t" style="left:1023.20px;top:210px;font-size:6.8px;letter-spacing:-0.323px;font-weight:bold;color:#3f51b5">Learning</div>
<div class="t" style="left:184.20px;top:246px;font-size:8px;letter-spacing:-0.111px;color:#444c5e">Bot Results</div>
<div class="t" style="left:193.90px;top:277px;font-size:6.8px;letter-spacing:-0.299px;font-weight:bold">Contained</div>
<div class="t" style="left:193.80px;top:298px;font-size:17.0px;letter-spacing:0.600px;color:#23306a">23</div>
<div class="t" style="left:332.10px;top:364px;font-size:7px;letter-spacing:-0.364px;color:#4a5cc0">View</div>
<div class="t" style="left:375.32px;top:277px;font-size:6.8px;letter-spacing:-0.218px;font-weight:bold">Transferred</div>
<div class="t" style="left:375.22px;top:298px;font-size:17.0px;color:#23306a">0</div>
<div class="t" style="left:513.32px;top:364px;font-size:7px;letter-spacing:-0.364px;color:#4a5cc0">View</div>
<div class="t" style="left:556.44px;top:277px;font-size:6.8px;letter-spacing:-0.290px;font-weight:bold">Agent Escalation</div>
<div class="t" style="left:556.44px;top:298px;font-size:17.0px;color:#23306a">5</div>
<div class="t" style="left:694.54px;top:364px;font-size:7px;letter-spacing:-0.364px;color:#4a5cc0">View</div>
<div class="t" style="left:737.66px;top:277px;font-size:6.8px;letter-spacing:-0.338px;font-weight:bold">Abandoned</div>
<div class="t" style="left:737.46px;top:298px;font-size:17.0px;color:#23306a">6</div>
<div class="t" style="left:875.76px;top:364px;font-size:7px;letter-spacing:-0.364px;color:#4a5cc0">View</div>
<div class="t" style="left:918.58px;top:277px;font-size:6.8px;letter-spacing:-0.287px;font-weight:bold">Recognition Failure</div>
<div class="t" style="left:919.18px;top:298px;font-size:17.0px;color:#23306a">1</div>
<div class="t" style="left:1056.98px;top:364px;font-size:7px;letter-spacing:-0.364px;color:#4a5cc0">View</div>
<div class="t" style="left:1099.80px;top:277px;font-size:6.8px;letter-spacing:-0.270px;font-weight:bold">Error</div>
<div class="t" style="left:1100.10px;top:298px;font-size:17.0px;color:#23306a">0</div>
<div class="t" style="left:1238.20px;top:364px;font-size:7px;letter-spacing:-0.364px;color:#4a5cc0">View</div>
<div class="t" style="left:194.40px;top:408px;font-size:10.5px;letter-spacing:-0.308px;color:#626978">Top Bot Flow Actions with Issues</div>
<div class="t" style="left:872.30px;top:408px;font-size:10.5px;letter-spacing:-0.279px;color:#626978">Intents Summary</div>
<div class="t" style="left:200.60px;top:451px;font-size:6.7px;letter-spacing:-0.210px;font-weight:bold">Action</div>
<div class="t" style="left:374.90px;top:451px;font-size:6.7px;letter-spacing:-0.249px;font-weight:bold">Task</div>
<div class="t" style="left:549.00px;top:451px;font-size:6.7px;letter-spacing:-0.269px;font-weight:bold">Outcome</div>
<div class="t" style="left:723.20px;top:451px;font-size:6.7px;letter-spacing:-0.332px;font-weight:bold">Frequency</div>
<div class="t" style="left:205.10px;top:473px;font-size:6.7px;letter-spacing:-0.224px;font-weight:bold">Action Deleted</div>
<div class="t" style="left:374.60px;top:472px;font-size:7px;color:#3a4457">-</div>
<div class="t" style="left:548.70px;top:472px;font-size:7px;letter-spacing:-0.102px;color:#3a4457">No Input</div>
<div class="t" style="left:723.30px;top:472px;font-size:7px;letter-spacing:-0.263px;color:#3a4457">8 (17%)</div>
<div class="t" style="left:200.60px;top:494px;font-size:7px;letter-spacing:-0.147px;color:#3a4457">41 Wait for Input</div>
<div class="t" style="left:374.30px;top:494px;font-size:7px;letter-spacing:-0.129px;color:#3a4457">Initial Greeting</div>
<div class="t" style="left:548.70px;top:494px;font-size:7px;letter-spacing:-0.052px;color:#3a4457">No Match</div>
<div class="t" style="left:723.30px;top:494px;font-size:7px;letter-spacing:-0.263px;color:#3a4457">7 (28%)</div>
<div class="t" style="left:200.60px;top:516px;font-size:7px;letter-spacing:-0.147px;color:#3a4457">41 Wait for Input</div>
<div class="t" style="left:374.30px;top:516px;font-size:7px;letter-spacing:-0.129px;color:#3a4457">Initial Greeting</div>
<div class="t" style="left:549.20px;top:516px;font-size:7px;letter-spacing:-0.239px;color:#3a4457">Agent Request</div>
<div class="t" style="left:723.40px;top:516px;font-size:7px;letter-spacing:-0.280px;color:#3a4457">5 (20%)</div>
<div class="t" style="left:205.10px;top:539px;font-size:6.7px;letter-spacing:-0.224px;font-weight:bold">Action Deleted</div>
<div class="t" style="left:374.60px;top:538px;font-size:7px;color:#3a4457">-</div>
<div class="t" style="left:548.70px;top:538px;font-size:7px;letter-spacing:-0.052px;color:#3a4457">No Match</div>
<div class="t" style="left:723.40px;top:538px;font-size:7px;letter-spacing:-0.227px;color:#3a4457">5 (11%)</div>
<div class="t" style="left:200.50px;top:560px;font-size:7px;letter-spacing:-0.134px;color:#3a4457">33 Ask for Slot</div>
<div class="t" style="left:374.40px;top:560px;font-size:7px;letter-spacing:-0.240px;color:#3a4457">Delivery</div>
<div class="t" style="left:548.70px;top:560px;font-size:7px;letter-spacing:-0.052px;color:#3a4457">No Match</div>
<div class="t" style="left:723.40px;top:560px;font-size:7px;letter-spacing:-0.280px;color:#3a4457">5 (24%)</div>
<div class="t" style="left:200.60px;top:582px;font-size:7px;letter-spacing:-0.147px;color:#3a4457">41 Wait for Input</div>
<div class="t" style="left:374.30px;top:582px;font-size:7px;letter-spacing:-0.129px;color:#3a4457">Initial Greeting</div>
<div class="t" style="left:548.90px;top:582px;font-size:7px;letter-spacing:-0.124px;color:#3a4457">Confirmation Prompted</div>
<div class="t" style="left:723.10px;top:582px;font-size:7px;letter-spacing:-0.237px;color:#3a4457">1 (4%)</div>
<div class="t" style="left:205.10px;top:605px;font-size:6.7px;letter-spacing:-0.224px;font-weight:bold">Action Deleted</div>
<div class="t" style="left:374.60px;top:604px;font-size:7px;color:#3a4457">-</div>
<div class="t" style="left:548.70px;top:604px;font-size:7px;letter-spacing:-0.052px;color:#3a4457">No Match</div>
<div class="t" style="left:723.10px;top:604px;font-size:7px;letter-spacing:-0.237px;color:#3a4457">1 (2%)</div>
<div class="t" style="left:970.30px;top:449px;font-size:7px;letter-spacing:-0.146px;color:#3a4457">Matched to an Intent</div>
<div class="t" style="left:970.30px;top:466px;font-size:7px;letter-spacing:-0.089px;color:#3a4457">Not Matched</div>
<div class="t" style="left:970.80px;top:489px;font-size:6.8px;letter-spacing:-0.255px;font-weight:bold;color:#3f51b5">Review No Match</div>
<div class="t" style="left:879.20px;top:539px;font-size:6.7px;letter-spacing:-0.041px;font-weight:bold">Name</div>
<div class="t" style="left:1127.10px;top:539px;font-size:6.7px;letter-spacing:-0.332px;font-weight:bold">Frequency</div>
<div class="t" style="left:887.50px;top:560px;font-size:7px;letter-spacing:-0.069px;color:#3a4457">Not Matched</div>
<div class="t" style="left:1127.20px;top:560px;font-size:7px;letter-spacing:-0.213px;color:#3a4457">7 (78%)</div>
<div class="t" style="left:879.10px;top:582px;font-size:7px;letter-spacing:-0.240px;color:#3a4457">Delivery</div>
<div class="t" style="left:1127.20px;top:582px;font-size:7px;letter-spacing:-0.213px;color:#3a4457">2 (22%)</div>
<div class="a" style="left:1272px;top:118px;width:8px;height:518px;background:#fdfdfd"></div>
<div class="a" style="left:1274px;top:126px;width:4.4px;height:418px;border-radius:2.2px;background:#8c8c8c"></div>
<svg style="left:1273.2px;top:120.5px" width="6" height="4" viewBox="0 0 6 4"><path d="M0 4H6L3 0Z" fill="#777"/></svg>
<svg style="left:1273.2px;top:629.5px" width="6" height="4" viewBox="0 0 6 4"><path d="M0 0H6L3 4Z" fill="#4b4b4b"/></svg>
</body></html>
